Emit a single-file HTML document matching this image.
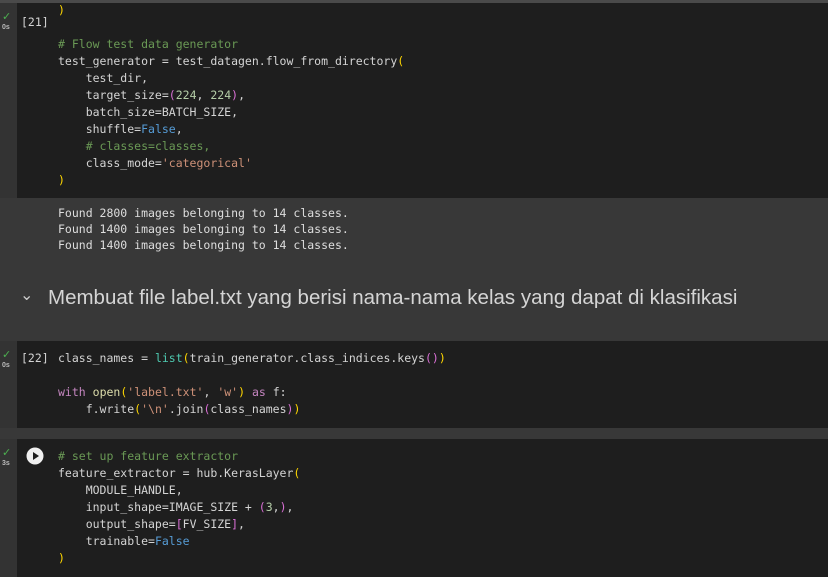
<!DOCTYPE html>
<html><head><style>
body{margin:0;width:828px;height:577px;background:#383838;overflow:hidden;position:relative;font-family:"DejaVu Sans Mono",monospace;}
.cell{position:absolute;left:17px;right:0;background:#1e1e1e;}
.code{position:absolute;left:58px;font-size:11.5px;line-height:17px;color:#d4d4d4;white-space:pre;}
.c{color:#6a9955}.s{color:#ce9178}.k{color:#569cd6}.y{color:#ffd700}.p{color:#da70d6}.n{color:#b5cea8}.f{color:#dcdcaa}.t{color:#4ec9b0}.kw{color:#c586c0}
.num{position:absolute;left:21px;font-size:11.5px;color:#d4d4d4}
.chk{position:absolute;left:2px;color:#4caf50;font-family:"Liberation Sans",sans-serif;font-size:11px;line-height:10px}
.tm{position:absolute;left:2px;color:#bbb;font-family:"Liberation Sans",sans-serif;font-size:7px;font-weight:bold}
</style></head><body>
<div style="position:absolute;left:0;top:0;width:828px;height:3px;background:#4a4a4a"></div>
<div style="position:absolute;left:0;top:3px;width:17px;height:195px;background:#333"></div>
<div class="cell" style="top:3px;height:195px"></div>
<div class="chk" style="top:12px">✓</div><div class="tm" style="top:24px">0s</div>
<div class="num" style="top:15px">[21]</div>
<div class="code" style="top:2px"><span class="y">)</span>

<span class="c"># Flow test data generator</span>
test_generator = test_datagen.flow_from_directory<span class="y">(</span>
    test_dir,
    target_size=<span class="p">(</span><span class="n">224</span>, <span class="n">224</span><span class="p">)</span>,
    batch_size=BATCH_SIZE,
    shuffle=<span class="k">False</span>,
    <span class="c"># classes=classes,</span>
    class_mode=<span class="s">'categorical'</span>
<span class="y">)</span></div>
<div class="code" style="top:205px;line-height:16px;color:#dedede">Found 2800 images belonging to 14 classes.
Found 1400 images belonging to 14 classes.
Found 1400 images belonging to 14 classes.</div>
<div style="position:absolute;left:20px;top:285px;color:#ccc;font-family:'Liberation Sans',sans-serif;font-size:16px">⌄</div>
<div style="position:absolute;left:48px;top:286px;color:#d5d5d5;font-family:'Liberation Sans',sans-serif;font-size:20.5px">Membuat file label.txt yang berisi nama-nama kelas yang dapat di klasifikasi</div>
<div style="position:absolute;left:0;top:341px;width:17px;height:87px;background:#333"></div>
<div class="cell" style="top:341px;height:87px"></div>
<div class="chk" style="top:350px">✓</div><div class="tm" style="top:362px">0s</div>
<div class="num" style="top:351px">[22]</div>
<div class="code" style="top:350px">class_names = <span class="t">list</span><span class="y">(</span>train_generator.class_indices.keys<span class="p">()</span><span class="y">)</span>

<span class="kw">with</span> <span class="f">open</span><span class="y">(</span><span class="s">'label.txt'</span>, <span class="s">'w'</span><span class="y">)</span> <span class="kw">as</span> f:
    f.write<span class="y">(</span><span class="s">'\n'</span>.join<span class="p">(</span>class_names<span class="p">)</span><span class="y">)</span></div>
<div style="position:absolute;left:0;top:439px;width:17px;height:138px;background:#333"></div>
<div class="cell" style="top:439px;height:138px"></div>
<div class="chk" style="top:448px">✓</div><div class="tm" style="top:460px">3s</div>
<svg style="position:absolute;left:26px;top:447px" width="18" height="18"><circle cx="9" cy="9" r="8.5" fill="#f0f0f0"/><path d="M7 5 L13 9 L7 13Z" fill="#1e1e1e"/></svg>
<div class="code" style="top:448px"><span class="c"># set up feature extractor</span>
feature_extractor = hub.KerasLayer<span class="y">(</span>
    MODULE_HANDLE,
    input_shape=IMAGE_SIZE + <span class="p">(</span><span class="n">3</span>,<span class="p">)</span>,
    output_shape=<span class="p">[</span>FV_SIZE<span class="p">]</span>,
    trainable=<span class="k">False</span>
<span class="y">)</span></div>
</body></html>
